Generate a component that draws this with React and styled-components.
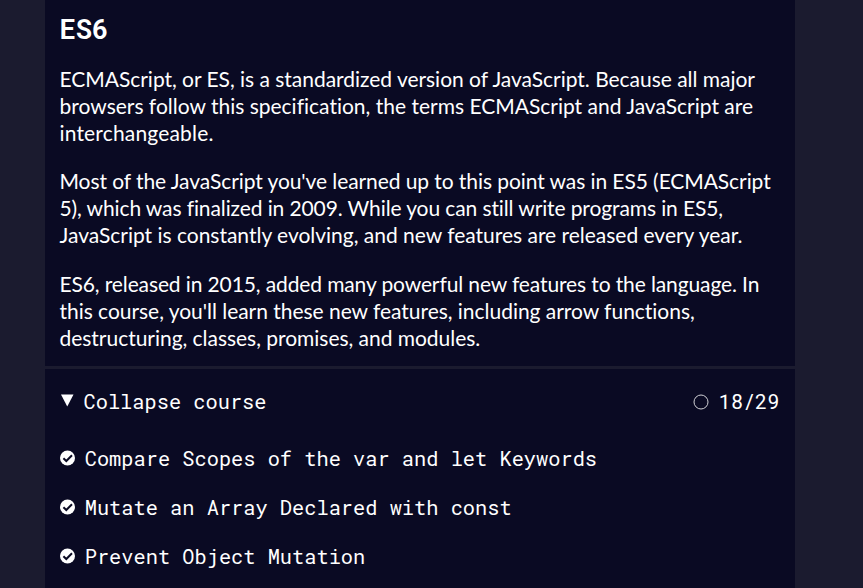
import React from "react";
import styled, { createGlobalStyle } from "styled-components";

const GlobalStyle = createGlobalStyle`
  * { box-sizing: border-box; }
  body { margin: 0; background: #1b1b2f; overflow: hidden; }
`;

const mono = `"Roboto Mono", "DejaVu Sans Mono", "Liberation Mono", monospace`;

const Page = styled.main`
  height: 588px;
  padding-left: 45px;
  overflow: hidden;
  color: #fff;
`;

const Block = styled.article`
  width: 750px;
`;

const Intro = styled.section`
  height: 366px;
  padding: 10px 14px 0 14.5px;
  background: #0a0a23;
`;

const Title = styled.h2`
  margin: 0 0 18px;
  font: 700 27px/37px ${mono};
`;

const Paragraph = styled.p`
  margin: 0 0 21px;
  color: #fff;
  font: 400 21px/27px Lato, sans-serif;
  font-variant-ligatures: none;
  white-space: nowrap;

  & + & {
    margin-bottom: 22px;
  }
`;

const Line = styled.span`
  display: block;
  letter-spacing: ${(p) => p.$tracking}px;
`;

const Course = styled.section`
  height: 219px;
  margin-top: 3px;
  padding: 0 15.5px 0 15px;
  background: #0a0a23;
  font: 400 20.33px/27px ${mono};
`;

const Toggle = styled.div`
  display: flex;
  align-items: center;
  height: 65px;
`;

const Triangle = styled.svg`
  width: 13px;
  height: 13px;
  margin: -3px 9.5px 0 1px;
`;

const Progress = styled.span`
  display: flex;
  align-items: center;
  gap: 10px;
  margin-left: auto;
`;

const Icon = styled.svg`
  flex: none;
  width: 16px;
  height: 16px;
`;

const List = styled.ul`
  margin: 0;
  padding: 0;
  list-style: none;
`;

const Challenge = styled.li`
  display: flex;
  align-items: center;
  gap: 8.7px;
  height: 49px;

  svg {
    margin-top: -1px;
  }
`;

const paragraphs = [
  [
    ["ECMAScript, or ES, is a standardized version of JavaScript. Because all major", -0.026],
    ["browsers follow this specification, the terms ECMAScript and JavaScript are", 0],
    ["interchangeable.", 0.17],
  ],
  [
    ["Most of the JavaScript you've learned up to this point was in ES5 (ECMAScript", -0.08],
    ["5), which was finalized in 2009. While you can still write programs in ES5,", -0.11],
    ["JavaScript is constantly evolving, and new features are released every year.", -0.013],
  ],
  [
    ["ES6, released in 2015, added many powerful new features to the language. In", -0.12],
    ["this course, you'll learn these new features, including arrow functions,", -0.03],
    ["destructuring, classes, promises, and modules.", -0.03],
  ],
];

const challenges = [
  "Compare Scopes of the var and let Keywords",
  "Mutate an Array Declared with const",
  "Prevent Object Mutation",
];

function PassedIcon() {
  return (
    <Icon viewBox="0 0 16 16" aria-label="Passed">
      <circle cx="7.5" cy="8" r="7.5" fill="#fff" />
      <path d="M3.4 8.2 6.3 11 12 5.2" fill="none" stroke="#0a0a23" strokeWidth="2" />
    </Icon>
  );
}

export default function App() {
  return (
    <Page>
      <GlobalStyle />
      <Block>
        <Intro>
          <Title>ES6</Title>
          {paragraphs.map((lines) => (
            <Paragraph key={lines[0][0]}>
              {lines.map(([text, tracking]) => (
                <Line key={text} $tracking={tracking}>
                  {text}
                </Line>
              ))}
            </Paragraph>
          ))}
        </Intro>
        <Course>
          <Toggle>
            <Triangle viewBox="0 0 13 13">
              <path d="M0 .5h12.5L6.25 12.5z" fill="#fff" />
            </Triangle>
            <span>Collapse course</span>
            <Progress>
              <Icon viewBox="0 0 16 16">
                <circle cx="8" cy="8" r="7" fill="none" stroke="#d0d0d5" />
              </Icon>
              <span>18/29</span>
            </Progress>
          </Toggle>
          <List>
            {challenges.map((name) => (
              <Challenge key={name}>
                <PassedIcon />
                <span>{name}</span>
              </Challenge>
            ))}
          </List>
        </Course>
      </Block>
    </Page>
  );
}
